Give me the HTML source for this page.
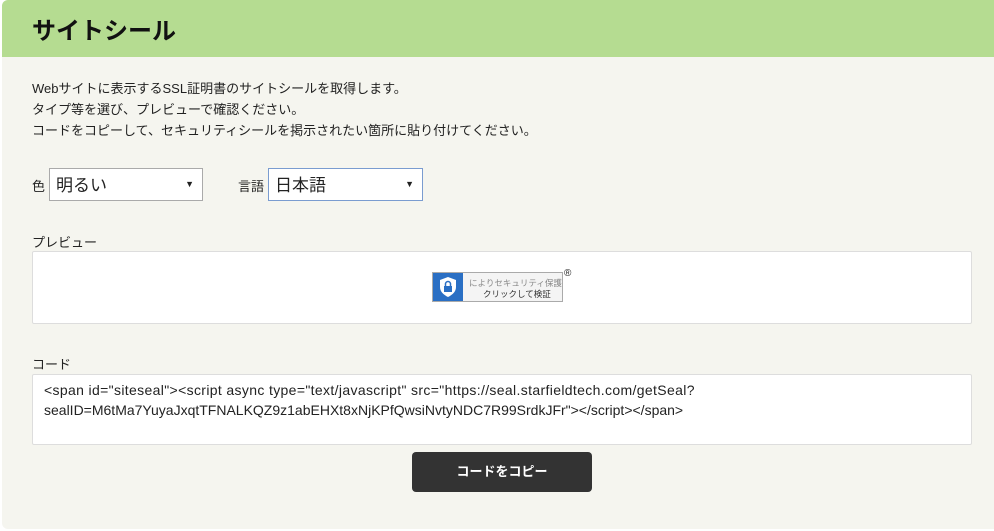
<!DOCTYPE html>
<html><head><meta charset="utf-8"><style>
*{margin:0;padding:0;box-sizing:border-box}
body{width:994px;height:531px;background:#fff;font-family:"Liberation Sans","Noto Sans CJK JP",sans-serif;color:#222;position:relative;overflow:hidden}
.panel{position:absolute;left:2px;top:0;width:992px;height:529px;background:#f5f5ef;border-radius:6px 0 0 6px;overflow:hidden}
.hdr{position:absolute;left:0;top:0;width:100%;height:57px;background:#b5dc91}
.hdr h1{position:absolute;left:30px;top:11px;font-size:24px;font-weight:bold;color:#111;letter-spacing:0}
.t{position:absolute;font-size:13px;white-space:nowrap}
.sel{position:absolute;height:33px;background:#fff;border:1px solid #aaa;font-size:17px;padding:2px 0 0 6px}
.sel:after{content:"▼";position:absolute;right:8px;top:10px;font-size:9px}
.box{position:absolute;background:#fff;border:1px solid #ddd;border-radius:2px}
.btn{position:absolute;left:410px;top:452px;width:180px;height:40px;background:#333;border-radius:4px;color:#fff;font-size:13px;font-weight:bold;text-align:center;line-height:40px}
.cl{position:absolute;left:11px;font-size:14px;white-space:nowrap;line-height:16px}
</style></head><body>
<div class="panel">
<div class="hdr"><h1>サイトシール</h1></div>
<div class="t" style="left:30px;top:78px">Webサイトに表示するSSL証明書のサイトシールを取得します。</div>
<div class="t" style="left:30px;top:99px">タイプ等を選び、プレビューで確認ください。</div>
<div class="t" style="left:30px;top:120px">コードをコピーして、セキュリティシールを掲示されたい箇所に貼り付けてください。</div>
<div class="t" style="left:30px;top:176px">色</div>
<div class="sel" style="left:47px;top:168px;width:154px">明るい</div>
<div class="t" style="left:236px;top:176px">言語</div>
<div class="sel" style="left:266px;top:168px;width:155px;border-color:#7a9cd0">日本語</div>
<div class="t" style="left:30px;top:232px">プレビュー</div>
<div class="box" style="left:30px;top:251px;width:940px;height:73px"></div>
<div style="position:absolute;left:430px;top:272px;width:131px;height:30px;border:1px solid #aaa;background:#f4f4f4">
 <div style="position:absolute;left:0;top:0;width:30px;height:28px;background:#2a6fc4">
  <svg width="30" height="28" viewBox="0 0 30 28"><path d="M15 4 L23 7 V14 C23 19 19 22 15 24 C11 22 7 19 7 14 V7 Z" fill="#fff"/><rect x="11" y="13" width="8" height="6" fill="#2a6fc4"/><path d="M12.5 13 V11 a2.5 2.5 0 0 1 5 0 V13" stroke="#2a6fc4" stroke-width="1.5" fill="none"/></svg>
 </div>
 <div style="position:absolute;left:36px;top:4px;font-size:8.5px;color:#888;white-space:nowrap">によりセキュリティ保護</div>
 <div style="position:absolute;left:50px;top:15px;font-size:8.5px;color:#333;white-space:nowrap">クリックして検証</div>
</div>
<div class="t" style="left:562px;top:268px;font-size:10px">®</div>
<div class="t" style="left:30px;top:354px">コード</div>
<div class="box" style="left:30px;top:374px;width:940px;height:71px">
 <div class="cl" style="top:7px;letter-spacing:0.35px">&lt;span id="siteseal"&gt;&lt;script async type="text/javascript" src="https://seal.starfieldtech.com/getSeal?</div>
 <div class="cl" style="top:27px">sealID=M6tMa7YuyaJxqtTFNALKQZ9z1abEHXt8xNjKPfQwsiNvtyNDC7R99SrdkJFr"&gt;&lt;/script&gt;&lt;/span&gt;</div>
</div>
<div class="btn">コードをコピー</div>
</div>
</body></html>
